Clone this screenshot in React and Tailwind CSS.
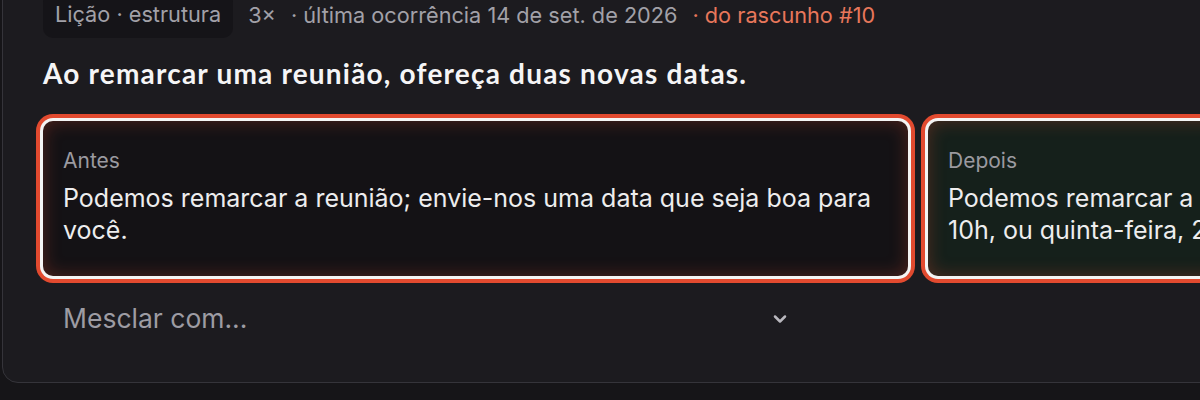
import React from 'react';
import { ChevronDown } from 'lucide-react';

const body = { fontFamily: 'Inter, "Noto Sans", sans-serif' };
const heading = { fontFamily: 'Lato, Inter, sans-serif' };

function Version({ label, children, tone }) {
  const bg = tone === 'after' ? 'bg-[#15201b]' : 'bg-[#141215]';
  return (
    <div
      className={`${bg} rounded-[10px] pt-[26px] pb-[30px] px-5 shadow-[0_0_0_3px_#f4f4f4,0_0_0_7px_#e24a2f,inset_0_0_18px_rgba(226,74,47,0.3)]`}
    >
      <div className="text-[21px] leading-7 text-[#9b9aa0]">{label}</div>
      <p className="mt-[7px] text-[25px] leading-8 text-[#ededee]">{children}</p>
    </div>
  );
}

export default function App() {
  return (
    <div className="min-h-screen w-full overflow-hidden bg-[#161518]" style={body}>
      <div className="ml-[2px] -mt-[29px] w-[1900px] rounded-2xl border border-[#35343a] bg-[#1c1b1f] pt-5 pb-[39px] px-10">
        {/* meta row */}
        <div className="flex items-center gap-[15px] text-[21.7px] leading-7 text-[#a2a1a8]">
          <span className="rounded-[10px] bg-[#151418] px-3 pt-2 pb-[10px]">Lição · estrutura</span>
          <span>3×</span>
          <span>· última ocorrência 14 de set. de 2026</span>
          <span className="text-[#e8775b]">· do rascunho #10</span>
        </div>

        <h2
          className="mt-[17px] text-[28px] leading-9 font-bold tracking-[1.2px] text-[#f5f5f6]"
          style={heading}
        >
          Ao remarcar uma reunião, ofereça duas novas datas.
        </h2>

        <div className="mt-[30px] grid grid-cols-[865px_865px] gap-5">
          <Version label="Antes">
            Podemos remarcar a reunião; envie-nos uma data que seja boa para você.
          </Version>
          <Version label="Depois" tone="after">
            Podemos remarcar a reunião para terça-feira, 16 de setembro, às
            <br />
            10h, ou quinta-feira, 25 de setembro, às 15h. Qual fica melhor?
          </Version>
        </div>

        {/* merge select */}
        <button className="mt-[19px] flex h-12 w-[767px] items-center justify-between pl-5 pr-5 text-[26.5px] text-[#9d9ca3]">
          <span>Mesclar com...</span>
          <ChevronDown size={20} strokeWidth={3} className="text-[#b9b8be]" />
        </button>
      </div>
    </div>
  );
}
